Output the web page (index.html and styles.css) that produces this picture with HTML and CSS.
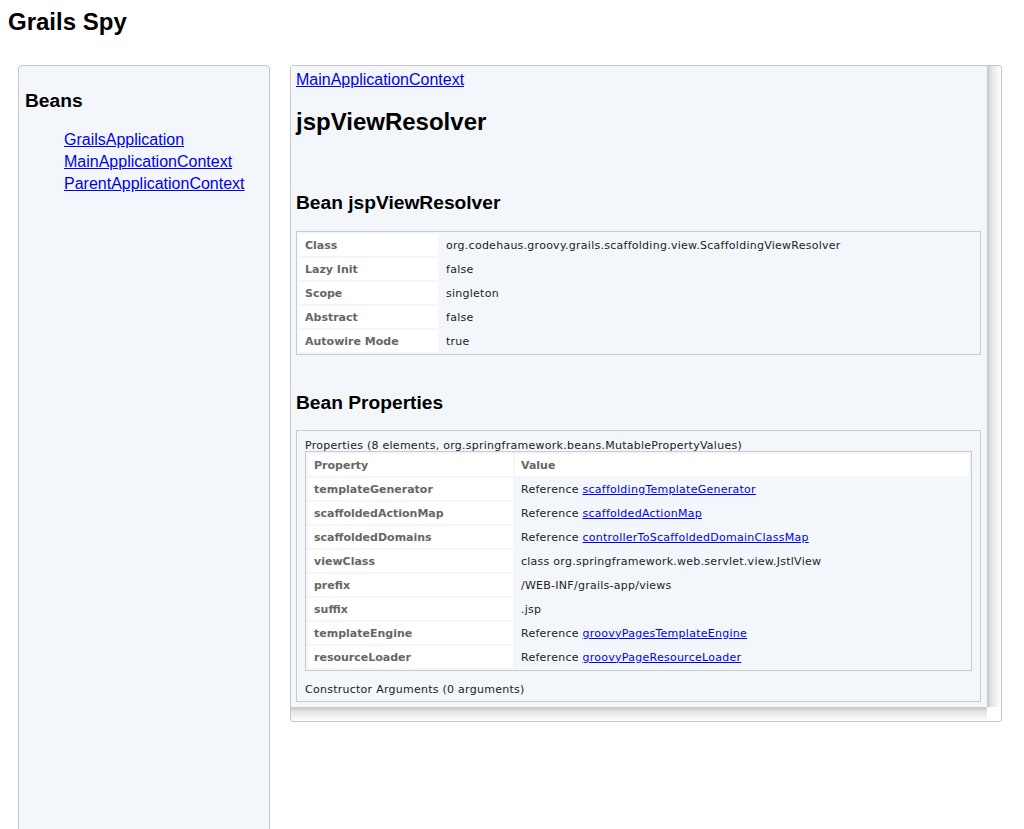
FILE: index.html
```html
<!DOCTYPE html>
<html>
<head>
<meta charset="utf-8">
<title>Grails Spy</title>
<link rel="stylesheet" href="styles.css">
</head>
<body>
<h1 class="title">Grails Spy</h1>
<div class="layout">
  <div class="sidebar">
    <h2 class="side-head">Beans</h2>
    <ul class="nav">
      <li><a href="#">GrailsApplication</a></li>
      <li><a href="#">MainApplicationContext</a></li>
      <li><a href="#">ParentApplicationContext</a></li>
    </ul>
  </div>
  <div class="panel">
    <div class="panel-inner">
      <div class="crumb"><a href="#">MainApplicationContext</a></div>
      <h1 class="bean-title">jspViewResolver</h1>
      <h2 class="section">Bean jspViewResolver</h2>
      <div class="box">
        <table class="info">
          <tr><th>Class</th><td>org.codehaus.groovy.grails.scaffolding.view.ScaffoldingViewResolver</td></tr>
          <tr><th>Lazy Init</th><td>false</td></tr>
          <tr><th>Scope</th><td>singleton</td></tr>
          <tr><th>Abstract</th><td>false</td></tr>
          <tr><th>Autowire Mode</th><td>true</td></tr>
        </table>
      </div>
      <h2 class="section section-props">Bean Properties</h2>
      <div class="box props-box">
        <div class="caption">Properties (8 elements, org.springframework.beans.MutablePropertyValues)</div>
        <table class="props">
          <tr class="head"><th>Property</th><th>Value</th></tr>
          <tr><th>templateGenerator</th><td>Reference <a href="#">scaffoldingTemplateGenerator</a></td></tr>
          <tr><th>scaffoldedActionMap</th><td>Reference <a href="#">scaffoldedActionMap</a></td></tr>
          <tr><th>scaffoldedDomains</th><td>Reference <a href="#">controllerToScaffoldedDomainClassMap</a></td></tr>
          <tr><th>viewClass</th><td>class org.springframework.web.servlet.view.JstlView</td></tr>
          <tr><th>prefix</th><td>/WEB-INF/grails-app/views</td></tr>
          <tr><th>suffix</th><td>.jsp</td></tr>
          <tr><th>templateEngine</th><td>Reference <a href="#">groovyPagesTemplateEngine</a></td></tr>
          <tr><th>resourceLoader</th><td>Reference <a href="#">groovyPageResourceLoader</a></td></tr>
        </table>
        <div class="ctor">Constructor Arguments (0 arguments)</div>
      </div>
    </div>
  </div>
</div>
</body>
</html>
```
FILE: styles.css
```css
html, body {
  background: #ffffff;
}
body {
  margin: 8px;
  font-family: "Liberation Sans", Arial, sans-serif;
  color: #000;
}
a {
  color: #0000ee;
}
.title {
  font-size: 24px;
  font-weight: bold;
  margin: 0 0 29px 0;
  line-height: 28px;
}
.layout {
  display: flex;
  align-items: flex-start;
  gap: 20px;
  padding-left: 10px;
  padding-right: 14px;
}
.sidebar {
  width: 252px;
  flex: none;
  min-height: 770px;
  background: #f3f7fb;
  border: 1px solid #c4c7ca;
  border-radius: 4px;
  padding: 24px 0 0 6px;
  box-sizing: border-box;
}
.side-head {
  font-size: 19.2px;
  margin: 0;
  line-height: 22px;
}
.nav {
  list-style: none;
  margin: 17px 0 0 0;
  padding: 0 0 0 39px;
  font-size: 16px;
  line-height: 22px;
}
.panel {
  flex: 1;
  border: 1px solid #c4c7ca;
  border-radius: 3px;
  padding: 0 14px 14px 0;
  background-color: #fff;
  background-image:
    linear-gradient(to right, #c6c6c6, #e6e6e6 35%, #ffffff 100%),
    linear-gradient(to bottom, #c6c6c6, #e6e6e6 35%, #ffffff 100%);
  background-size: 14px calc(100% - 14px), calc(100% - 14px) 14px;
  background-position: right top, left bottom;
  background-repeat: no-repeat;
}
.panel-inner {
  background: #f3f7fb;
  padding: 5px 6px 5px 5px;
}
.crumb {
  font-size: 16px;
  line-height: 18px;
}
.bean-title {
  font-size: 24px;
  line-height: 28px;
  margin: 19px 0 0 0;
}
.section {
  font-size: 19.2px;
  line-height: 22px;
  margin: 56px 0 17px 0;
}
.section-props {
  margin-top: 37px;
  margin-bottom: 16px;
}
.box {
  border: 1px solid #c8ccd0;
}
table {
  border-collapse: separate;
  border-spacing: 2px;
  font-family: "DejaVu Sans", Verdana, sans-serif;
  font-size: 11px;
}
th, td {
  height: 22px;
  padding: 0 7px;
  box-sizing: border-box;
  line-height: 13px;
  text-align: left;
  vertical-align: middle;
}
th {
  color: #666;
  font-weight: bold;
  background: #ffffff;
}
td {
  color: #222;
  letter-spacing: 0.26px;
}
.info {
  width: 100%;
  border-spacing: 1px 2px;
  margin: 0;
}
.info th {
  width: 140px;
}
.props-box {
  padding: 9px 8px 0 8px;
  font-family: "DejaVu Sans", Verdana, sans-serif;
  font-size: 11px;
  color: #222;
}
.caption {
  line-height: 11px;
  letter-spacing: 0.26px;
}
.props {
  width: 100%;
  border: 1px solid #c8ccd0;
}
.props th, .props td {
  padding: 0 6px;
}
.props th {
  width: 205px;
}
.props .head th {
  width: auto;
}
.props .head th:first-child {
  width: 205px;
}
.ctor {
  line-height: 13px;
  padding: 12px 0 5px 0;
  letter-spacing: 0.26px;
}
```
